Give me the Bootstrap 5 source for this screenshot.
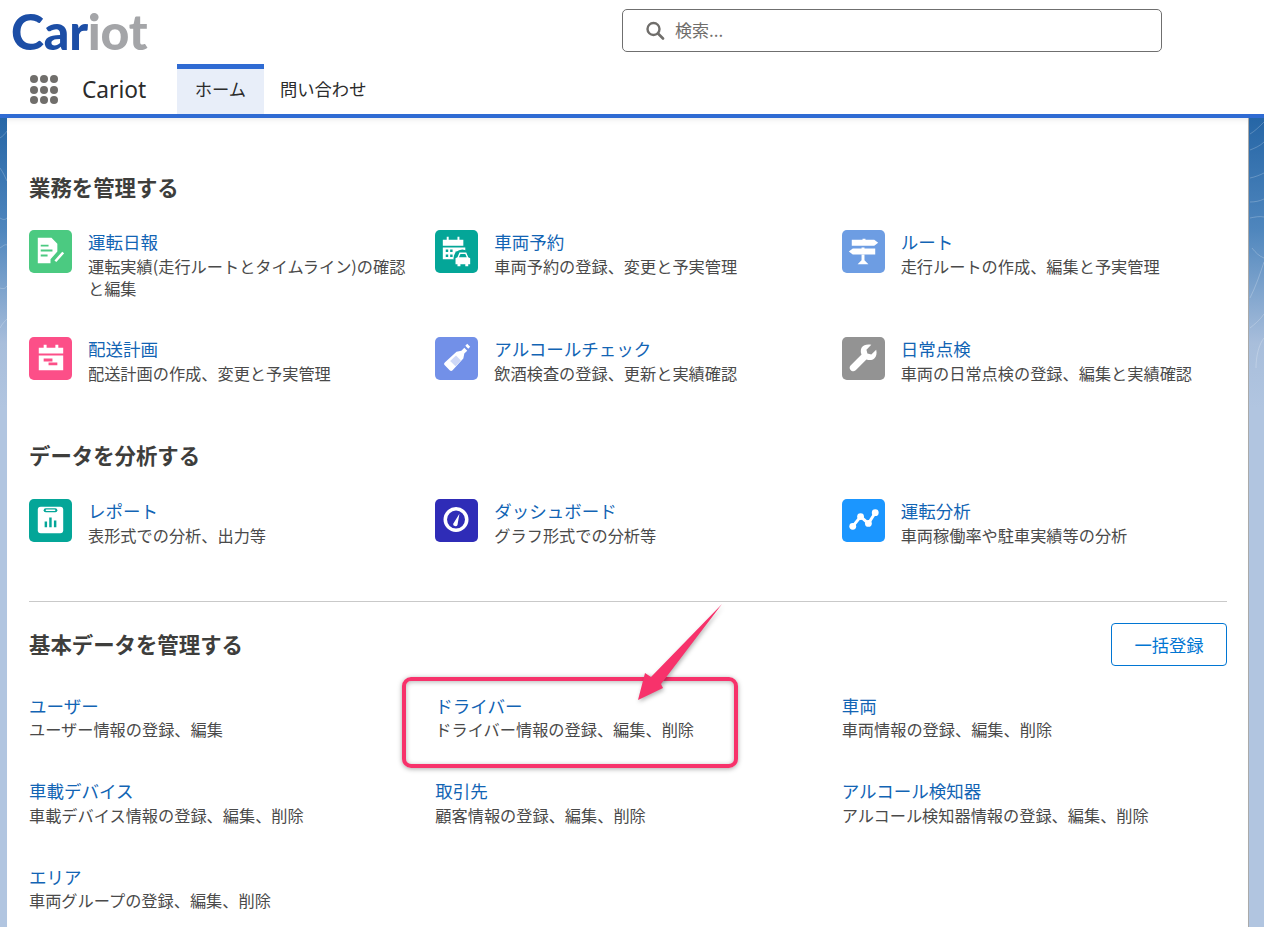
<!doctype html>
<html lang="ja"><head><meta charset="utf-8"><title>Cariot</title>
<link href="https://cdn.jsdelivr.net/npm/bootstrap@5.3.0/dist/css/bootstrap.min.css" rel="stylesheet">
<style>
html,body{height:927px;overflow:hidden}
body{font-family:"Noto Sans CJK JP","Liberation Sans",sans-serif;background:#fff;color:#444;position:relative}
.top-head{height:64px;padding-left:11px}
.logo-word{font-family:Lato,"Liberation Sans",sans-serif;font-weight:900;font-size:50px;line-height:44px;letter-spacing:-.2px;width:611px;padding-top:9px;height:64px}
.logo-a{color:#1c4ea6}.logo-b{color:#a4a5a8}
.search-box{width:540px;height:43px;margin-top:9px;border:1px solid #6f6f6f;border-radius:5px;padding-left:22px;gap:10px;font-size:17px;color:#706e6b;line-height:40px;padding-bottom:2px}
.app-nav{height:54px;border-bottom:4px solid #2f6bd3;padding-left:30px}
.dots{width:28px;height:29px;margin-top:11px;display:grid;grid-template-columns:repeat(3,8px);gap:2.5px 2px}
.dots i{width:8px;height:8px;border-radius:50%;background:#706e6b;display:block}
.app-name{font-family:"Noto Sans",sans-serif;font-size:22.7px;color:#2b2b2b;margin-left:24px;margin-top:8px;line-height:36px;white-space:nowrap;flex:0 0 95px}
.tab-on{width:87px;height:50px;background:#e8eef9;border-top:5px solid #2f6bd3;text-align:center;font-size:17.3px;line-height:40px;color:#2b2b2b}
.tab-off{font-size:17.3px;color:#2b2b2b;padding-left:16px;line-height:50px}
.page-back{height:809px;padding:0 15px 0 7px;background:url("data:image/svg+xml,%3Csvg xmlns='http://www.w3.org/2000/svg' width='1264' height='260'%3E%3Cg fill='none' stroke='%23fff' stroke-opacity='.22' stroke-width='1'%3E%3Cpath d='M1250 16c5-3 9-7 14-12M1250 32c5-2 10-4 14-8M1250 60c5-1 10-3 14-5M1250 84c5 0 10-1 14-3M1250 100c5-1 10-2 14-1M1252 130c4 5 7 8 12 10M1250 180c6-12 10-24 14-36M1250 210c5-4 10-8 14-14M1256 250c0-12 3-24 8-30M0 20c3-2 5-4 7-7M0 50c3 4 5 9 7 13M0 100c3 2 5 2 7 0M0 130c3-2 5-4 7-3M0 170c3 1 5 1 7-2M0 210c2-4 5-7 7-9'/%3E%3C/g%3E%3C/svg%3E") no-repeat,linear-gradient(180deg,#2666a6 0,#4f86bd 112px,#a8bedb 225px,#b1c5e0 290px,#b1c5e0 100%)}
.sheet{height:809px;background:#fff;border-right:1px solid #aaa;padding-left:22px;box-shadow:inset 0 6px 6px -5px rgba(0,0,0,.1)}
.sec-title{font-size:21.4px;font-weight:700;color:#3e3e3c;line-height:30px;margin:0}
.sec-a{padding-top:54px}.sec-b{margin-top:21px}
.head-lift{padding-bottom:1px}
.item-t{font-size:17.5px;line-height:22px;color:#1264b4;text-decoration:none;display:block;margin-bottom:1.5px}
.item-d{font-size:16.2px;line-height:22.5px;color:#4a4a4a;margin:0}
.ico{width:43px;height:43px;flex:0 0 43px;margin-right:16px;display:block}
.row-a{height:107px}.row-a2{height:82px}.row-b{height:85.5px}
.tx{padding-right:28px;margin-top:1px}
.row-top{margin-top:28px}.row-mid{margin-top:29px}
.divider{border-top:1px solid #c9c9c9;width:1198px;margin-top:55px}
.bulk{width:116px;height:43px;border:1px solid #0176d3;border-radius:4px;color:#0176d3;background:#fff;font-size:17.3px;line-height:41px;text-align:center;padding:0}
.sec-head{width:1198px;margin-top:20px;height:44px;margin-bottom:28.5px}
.hilite{position:absolute;left:402px;top:677px;width:336px;height:91px;border:4px solid #f7326b;border-radius:9px;box-shadow:0 1px 5px rgba(0,0,0,.35),inset 0 1px 5px rgba(0,0,0,.3);pointer-events:none}
.arrow{position:absolute;left:630px;top:595px;filter:drop-shadow(1px 2px 2px rgba(0,0,0,.3))}
</style></head><body>
<div class="top-head d-flex">
  <div class="logo-word"><span class="logo-a">Car</span><span class="logo-b">iot</span></div>
  <div class="search-box d-flex align-items-center">
    <svg width="20" height="20" viewBox="0 0 20 20"><circle cx="8.500" cy="9" r="6" fill="none" stroke="#706e6b" stroke-width="2.400"/><path d="M13 13.500l5 5" stroke="#706e6b" stroke-width="2.600" stroke-linecap="round"/></svg>
    <span>検索...</span>
  </div>
</div>
<div class="app-nav d-flex">
  <div class="dots"><i></i><i></i><i></i><i></i><i></i><i></i><i></i><i></i><i></i></div>
  <div class="app-name">Cariot</div>
  <div class="tab-on">ホーム</div>
  <div class="tab-off">問い合わせ</div>
</div>
<div class="page-back"><div class="sheet">
  <div class="sec-a"><h2 class="sec-title">業務を管理する</h2></div>
  <div class="row g-0 row-top">
    <div class="col-4 row-a d-flex"><svg class="ico" viewBox="0 0 44 44"><rect width="44" height="44" rx="5" fill="#4bca81"/><path d="M9 8h14l6 6v8l-7 8v4H9z" fill="#fff"/><path d="M12 16h8M12 21h12M12 26h7" stroke="#4bca81" stroke-width="2"/><path d="M27 32l8-9" stroke="#fff" stroke-width="2.600"/></svg><div class="tx"><a class="item-t" href="#">運転日報</a><p class="item-d">運転実績(走行ルートとタイムライン)の確認と編集</p></div></div>
    <div class="col-4 row-a d-flex"><svg class="ico" viewBox="0 0 44 44"><rect width="44" height="44" rx="5" fill="#04a698"/><path d="M8 10h4V7h2v3h9V7h2v3h4v6H8z" fill="#fff"/><path d="M8 18h23v4H21v8H8z" fill="#fff"/><path d="M11 20h2.500v2.500H11zM15.500 20H18v2.500h-2.500zM11 25h2.500v2.500H11zM15.500 25H18v2.500h-2.500z" fill="#04a698"/><circle cx="28" cy="29" r="9" fill="#04a698"/><path d="M21 35v-6l2-1 2-5h7l2 5 2 1v6h-2v2h-3v-2h-5v2h-3v-2z" fill="#fff"/><path d="M24.500 28l1.500-3.500h5l1.500 3.500z" fill="#04a698"/></svg><div class="tx"><a class="item-t" href="#">車両予約</a><p class="item-d">車両予約の登録、変更と予実管理</p></div></div>
    <div class="col-4 row-a d-flex"><svg class="ico" viewBox="0 0 44 44"><rect width="44" height="44" rx="5" fill="#6d9de3"/><path d="M10 10h11V9h3v1h9l4 3-4 3H10zM11 19h9v-1h3v1h11v6H11l-4-3z" fill="#fff"/><path d="M20 25h3v6l4 4H16l4-4z" fill="#fff"/></svg><div class="tx"><a class="item-t" href="#">ルート</a><p class="item-d">走行ルートの作成、編集と予実管理</p></div></div>
    <div class="col-4 row-a2 d-flex"><svg class="ico" viewBox="0 0 44 44"><rect width="44" height="44" rx="5" fill="#fc4f88"/><path d="M10 11h5V8h3v3h9V8h3v3h5v6H10zM10 19h25v15H10z" fill="#fff"/><path d="M15 22h9v3h-9zM20 26h9v3h-9z" fill="#fc4f88"/></svg><div class="tx"><a class="item-t" href="#">配送計画</a><p class="item-d">配送計画の作成、変更と予実管理</p></div></div>
    <div class="col-4 row-a2 d-flex"><svg class="ico" viewBox="0 0 44 44"><rect width="44" height="44" rx="5" fill="#7290e8"/><path d="M10 26l12-11 5-1 3-3 3 3-3 3-1 5-11 12a2 2 0 0 1-3 0l-5-5a2 2 0 0 1 0-3z" fill="#fff"/><path d="M15.500 24.500l6-5.500 5 5-5.500 6z" fill="#7290e8" opacity=".35"/><path d="M31 9l2-2 3 3-2 2z" fill="#fff"/></svg><div class="tx"><a class="item-t" href="#">アルコールチェック</a><p class="item-d">飲酒検査の登録、更新と実績確認</p></div></div>
    <div class="col-4 row-a2 d-flex"><svg class="ico" viewBox="0 0 44 44"><rect width="44" height="44" rx="5" fill="#939393"/><path d="M35 13l-5 5-4-1-1-4 5-5c-4-1-8 0-10 3-1 2-1 5 0 7L9 29c-2 2-1 4 0 5s3 2 5 0l11-11c3 1 6 1 8-1 2-2 3-5 2-9z" fill="#fff"/></svg><div class="tx"><a class="item-t" href="#">日常点検</a><p class="item-d">車両の日常点検の登録、編集と実績確認</p></div></div>
  </div>
  <h2 class="sec-title sec-b">データを分析する</h2>
  <div class="row g-0 row-mid">
    <div class="col-4 d-flex"><svg class="ico" viewBox="0 0 44 44"><rect width="44" height="44" rx="5" fill="#04a698"/><rect x="9" y="8" width="26" height="27" rx="3" fill="#fff"/><rect x="15" y="9.500" width="14" height="4" rx="2" fill="#04a698"/><rect x="17" y="10.700" width="10" height="1.600" rx=".8" fill="#fff"/><path d="M16 23h2.500v6H16zM20.700 19h2.500v10h-2.500zM25.500 22H28v7h-2.500z" fill="#04a698"/></svg><div class="tx"><a class="item-t" href="#">レポート</a><p class="item-d">表形式での分析、出力等</p></div></div>
    <div class="col-4 d-flex"><svg class="ico" viewBox="0 0 44 44"><rect width="44" height="44" rx="5" fill="#2f2cb7"/><circle cx="21.500" cy="21" r="11" fill="none" stroke="#fff" stroke-width="3.600"/><path d="M18.500 25.500L25 15l-2 11.500a2.400 2.400 0 0 1-4.500-1z" fill="#fff"/></svg><div class="tx"><a class="item-t" href="#">ダッシュボード</a><p class="item-d">グラフ形式での分析等</p></div></div>
    <div class="col-4 d-flex"><svg class="ico" viewBox="0 0 44 44"><rect width="44" height="44" rx="5" fill="#1b96ff"/><path d="M11 28l8-10 8 7 7-11" fill="none" stroke="#fff" stroke-width="3"/><circle cx="11" cy="28" r="3.500" fill="#fff"/><circle cx="19" cy="18" r="3.500" fill="#fff"/><circle cx="27" cy="25" r="3.500" fill="#fff"/><circle cx="34" cy="14" r="3.500" fill="#fff"/></svg><div class="tx"><a class="item-t" href="#">運転分析</a><p class="item-d">車両稼働率や駐車実績等の分析</p></div></div>
  </div>
  <div class="divider"></div>
  <div class="sec-head d-flex justify-content-between align-items-center"><h2 class="sec-title head-lift">基本データを管理する</h2><button class="bulk" type="button">一括登録</button></div>
  <div class="row g-0">
    <div class="col-4 row-b"><a class="item-t" href="#">ユーザー</a><p class="item-d">ユーザー情報の登録、編集</p></div>
    <div class="col-4 row-b"><a class="item-t" href="#">ドライバー</a><p class="item-d">ドライバー情報の登録、編集、削除</p></div>
    <div class="col-4 row-b"><a class="item-t" href="#">車両</a><p class="item-d">車両情報の登録、編集、削除</p></div>
    <div class="col-4 row-b"><a class="item-t" href="#">車載デバイス</a><p class="item-d">車載デバイス情報の登録、編集、削除</p></div>
    <div class="col-4 row-b"><a class="item-t" href="#">取引先</a><p class="item-d">顧客情報の登録、編集、削除</p></div>
    <div class="col-4 row-b"><a class="item-t" href="#">アルコール検知器</a><p class="item-d">アルコール検知器情報の登録、編集、削除</p></div>
    <div class="col-4 row-b"><a class="item-t" href="#">エリア</a><p class="item-d">車両グループの登録、編集、削除</p></div>
  </div>
</div></div>
<div class="hilite"></div>
<svg class="arrow" width="100" height="110" viewBox="630 595 100 110"><path d="M722 604L661 684 L663 688 L638 700 L645 673 L651 677z" fill="#f7326b"/></svg>
</body></html>
